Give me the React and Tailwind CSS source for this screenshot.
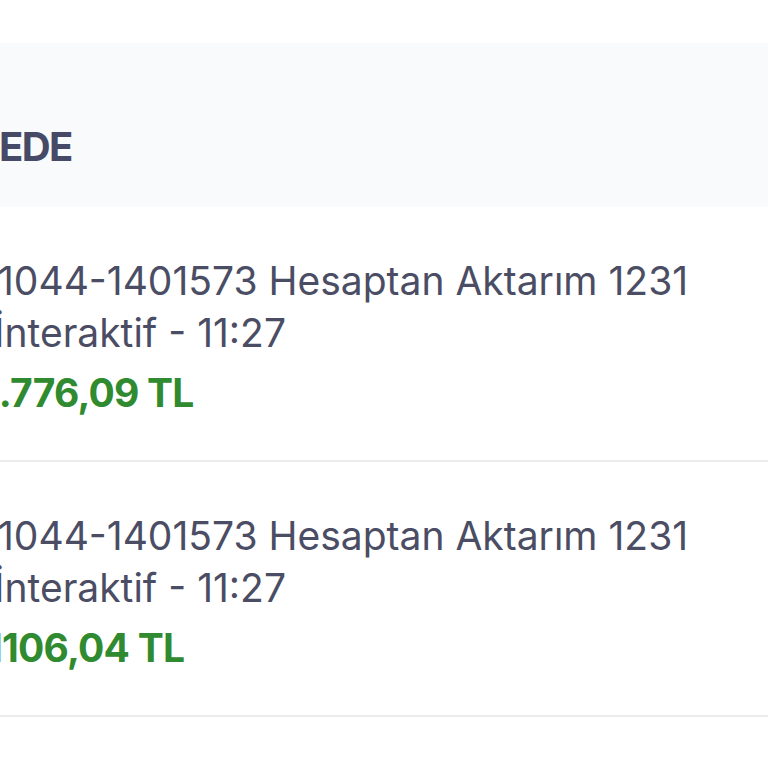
export default function App() {
  const rows = [
    { amount: "2.776,09 TL", offset: "-ml-[25px]" },
    { amount: "1106,04 TL", offset: "-ml-[14px]" },
  ];
  return (
    <div className="w-[768px] h-[768px] overflow-hidden bg-white font-['Inter',sans-serif]">
      <div className="h-[43px] bg-white" />
      {/* section header */}
      <div className="h-[164px] bg-[#f9fafc] pt-[80px]">
        <div className="-ml-[1px] text-[40px] leading-[48px] font-bold text-[#464a66] tracking-[-0.04em]">EDE</div>
      </div>

      {rows.map((row, i) => (
        <div key={i} className="h-[255px] border-b-2 border-[#ececec] flex flex-col pt-[48px]">
          <div className="text-[39px] leading-[52px] text-[#4a4d63] whitespace-nowrap -ml-[2px]">
            1044-1401573 Hesaptan Aktarım 1231
          </div>
          <div className="text-[39px] leading-[52px] text-[#4a4d63] whitespace-nowrap -ml-[6px]">
            İnteraktif - 11:27
          </div>
          <div className={`mt-[8px] text-[39px] leading-[52px] font-bold text-[#2f8a30] whitespace-nowrap tracking-[-0.02em] ${row.offset}`}>
            {row.amount}
          </div>
        </div>
      ))}
    </div>
  );
}
